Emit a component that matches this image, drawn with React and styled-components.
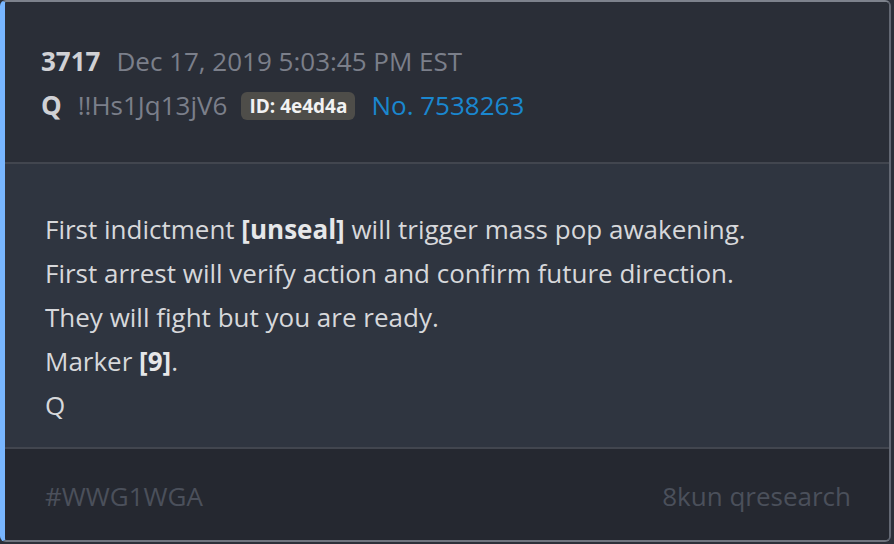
import React from 'react';
import styled, { createGlobalStyle } from 'styled-components';

const GlobalStyle = createGlobalStyle`
  html, body {
    margin: 0;
    padding: 0;
    background: #2c3039;
  }
  body {
    font-family: "Open Sans", "DejaVu Sans", sans-serif;
  }
`;

const Card = styled.div`
  box-sizing: border-box;
  width: 891px;
  height: 542px;
  display: flex;
  flex-direction: column;
  border: 2px solid #7d828c;
  border-right-color: #636873;
  border-bottom-color: #6f747e;
  border-left: 5px solid #78b6ff;
  border-radius: 6px;
  overflow: hidden;
  background: #2a2e37;
`;

const Header = styled.div`
  background: #2a2e37;
  padding: 37px 36px 0;
  height: 162px;
  flex: none;
  box-sizing: border-box;
  border-bottom: 2px solid #42464f;
`;

const Row = styled.div`
  display: flex;
  align-items: center;
  height: 44px;
  font-size: 26px;
  white-space: nowrap;
`;

const Strong = styled.span`
  font-weight: 700;
  color: #d0d1d5;
  margin-right: 16px;
`;

const Muted = styled.span`
  color: #7b7f8a;
  margin-right: 14px;
`;

const Badge = styled.span`
  background: #4e4d49;
  color: #f2f2f2;
  font-weight: 700;
  font-size: 19px;
  line-height: 28px;
  padding: 0 8px;
  border-radius: 6px;
  margin-top: 2px;
  margin-right: 16px;
`;

const PostLink = styled.span`
  color: #1a87cf;
`;

const Body = styled.div`
  flex: 1;
  background: #2f3540;
  padding: 43px 40px 0 40px;
  border-bottom: 2px solid #42464f;
`;

const Line = styled.div`
  font-size: 26px;
  line-height: 44px;
  color: #d7d8db;
  white-space: nowrap;

  b {
    color: #e6e7e9;
    font-weight: 700;
  }
`;

const Footer = styled.div`
  height: 91px;
  flex: none;
  box-sizing: border-box;
  background: #252830;
  display: flex;
  justify-content: space-between;
  align-items: center;
  padding: 3px 38px 0 40px;
  font-size: 26px;
  color: #4b505b;
`;

export default function App() {
  return (
    <>
      <GlobalStyle />
      <Card>
        <Header>
          <Row>
            <Strong>3717</Strong>
            <Muted>Dec 17, 2019 5:03:45 PM EST</Muted>
          </Row>
          <Row>
            <Strong>Q</Strong>
            <Muted>!!Hs1Jq13jV6</Muted>
            <Badge>ID: 4e4d4a</Badge>
            <PostLink>No. 7538263</PostLink>
          </Row>
        </Header>
        <Body>
          <Line>First indictment <b>[unseal]</b> will trigger mass pop awakening.</Line>
          <Line>First arrest will verify action and confirm future direction.</Line>
          <Line>They will fight but you are ready.</Line>
          <Line>Marker <b>[9]</b>.</Line>
          <Line>Q</Line>
        </Body>
        <Footer>
          <span>#WWG1WGA</span>
          <span>8kun qresearch</span>
        </Footer>
      </Card>
    </>
  );
}
